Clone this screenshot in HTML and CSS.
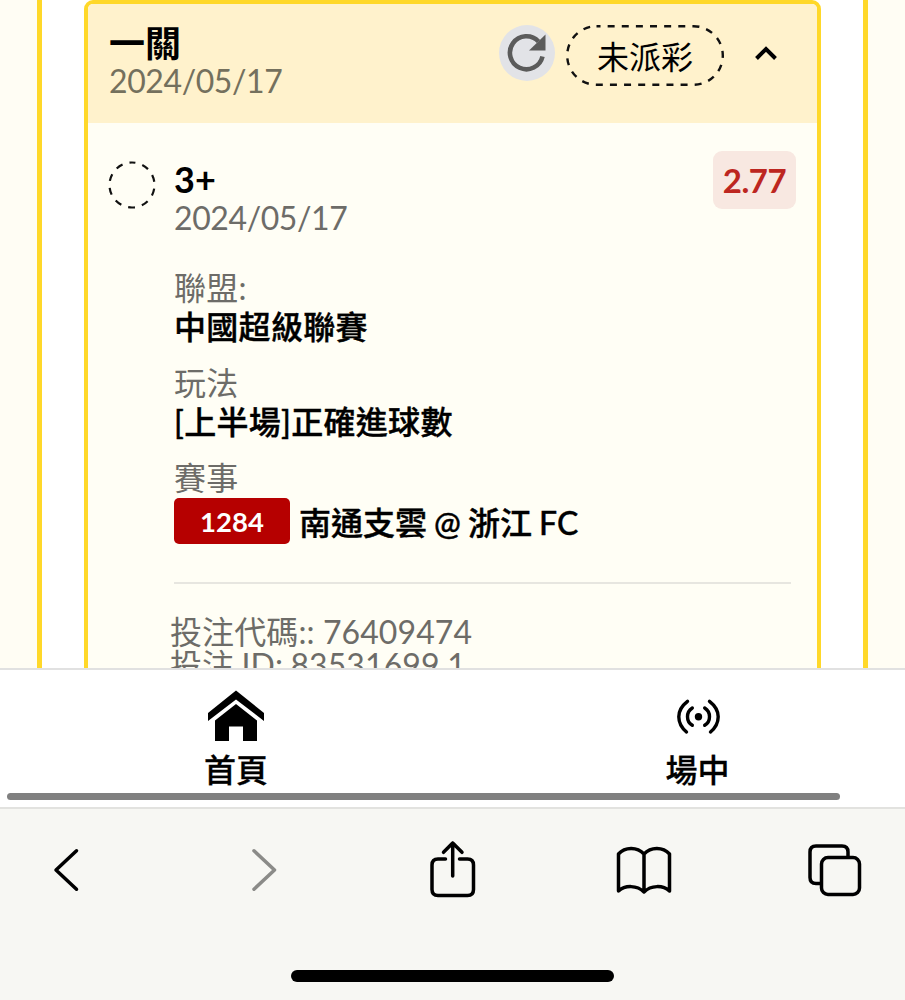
FILE: index.html
```html
<!DOCTYPE html>
<html lang="zh-Hant">
<head>
<meta charset="utf-8">
<title>投注記錄</title>
<link rel="stylesheet" href="styles.css">
</head>
<body>
<main class="page">
  <div class="panel">
    <article class="card">
      <header class="card-head">
        <div class="head-text">
          <h1 class="title">一關</h1>
          <p class="date head-date">2024/05/17</p>
        </div>
        <div class="head-actions">
          <span class="refresh">
            <svg width="56" height="56" viewBox="0 0 56 56"><path d="M43.500 31.500A16.500 16.500 0 1 1 39.500 16.500" fill="none" stroke="#5b5b5b" stroke-width="4.600"/><path d="M46.500 9.500V25.500H30Z" fill="#5b5b5b"/></svg>
          </span>
          <span class="status">
            <svg class="outline" width="158" height="61" viewBox="0 0 158 61"><rect x="1.200" y="1.200" width="155.600" height="58.600" rx="29.300" fill="none" stroke="#111" stroke-width="2.400" stroke-dasharray="7 7.130" stroke-dashoffset="3"/></svg>
            <span class="status-text">未派彩</span>
          </span>
          <svg class="caret" width="24" height="20" viewBox="0 0 24 20"><path d="M2.500 14.500L12 5L21.500 14.500" fill="none" stroke="#000" stroke-width="4"/></svg>
        </div>
      </header>
      <section class="card-body">
        <svg class="ring" width="48" height="48" viewBox="0 0 48 48"><circle cx="24" cy="24" r="22.500" fill="none" stroke="#111" stroke-width="2.200" stroke-dasharray="7 7.137" stroke-dashoffset="3.500" transform="rotate(-90 24 24)"/></svg>
        <div class="detail">
          <div class="pick-row">
            <div>
              <h2 class="pick">3+</h2>
              <p class="date">2024/05/17</p>
            </div>
            <span class="odds">2.77</span>
          </div>
          <dl class="facts">
            <div class="fact"><dt>聯盟:</dt><dd>中國超級聯賽</dd></div>
            <div class="fact"><dt>玩法</dt><dd>[上半場]正確進球數</dd></div>
            <div class="fact"><dt>賽事</dt><dd class="match"><span class="code">1284</span><span class="teams">南通支雲 @ 浙江 FC</span></dd></div>
          </dl>
          <div class="ids">
            <p>投注代碼:: 76409474</p>
            <p class="bet-id">投注 ID: 83531699.1</p>
          </div>
        </div>
      </section>
    </article>
  </div>
</main>
<nav class="tabs">
  <a class="tab home">
    <svg width="58" height="52" viewBox="0 0 58 52"><path d="M29 0.500L57 23V31L29 9.500L1 31V23Z"/><path d="M29 14L50 30.500V51H36V36.500H22V51H8V30.500Z"/></svg>
    <span>首頁</span>
  </a>
  <a class="tab live">
    <svg width="58" height="52" viewBox="0 0 58 52"><g fill="none" stroke="#000" stroke-width="3.400" stroke-linecap="round"><path d="M18.500 11.300Q9.800 18 9.800 26.700T17.500 42M23.300 18Q18.500 21 18.500 26.700T23.300 35.300M35.700 18Q40.500 21 40.500 26.700T35.700 35.300M40.500 11.300Q49.200 18 49.200 26.700T41.500 42"/></g><circle cx="29.500" cy="26.700" r="3.700"/></svg>
    <span>場中</span>
  </a>
  <div class="scrollbar"></div>
</nav>
<footer class="browser">
  <div class="tools">
    <svg class="back" width="28" height="46" viewBox="0 0 28 46"><path d="M24.500 3.800L4 23L24.500 42.200" class="line"/></svg>
    <svg class="muted" width="28" height="46" viewBox="0 0 28 46"><path d="M4 3.800L24.500 23L4 42.200" class="line"/></svg>
    <svg class="share" width="46" height="58" viewBox="0 0 46 58"><path d="M15.500 19H8Q2 19 2 25V49.500Q2 55.500 8 55.500H37.500Q43.500 55.500 43.500 49.500V25Q43.500 19 37.500 19H29.500M22.700 36V3M13.500 12.300L22.700 3L32 12.300" class="line"/></svg>
    <svg width="58" height="50" viewBox="0 0 58 50"><path d="M29 8C22 0.500 10 .8 3.500 8V45C10 39 22 39 29 46C36 39 48 39 54.500 45V8C48 .8 36 .5 29 8V46" class="line"/></svg>
    <svg width="56" height="56" viewBox="0 0 56 56"><path d="M41 14V9Q41 3 35 3H9Q3 3 3 9V34.500Q3 40.500 9 40.500H14" class="line"/><rect x="14.500" y="14.500" width="38" height="37" rx="6.500" class="line"/></svg>
  </div>
  <div class="home-bar"></div>
</footer>
</body>
</html>
```

FILE: styles.css
```css
* { box-sizing: border-box; margin: 0; padding: 0; }
body { width: 905px; height: 1000px; overflow: hidden; display: flex; flex-direction: column; background: #fff; color: #000; font-family: Lato, "Noto Sans CJK TC", sans-serif; font-size: 32px; line-height: 38px; white-space: nowrap; }
svg { display: block; flex: none; }
.page { height: 668px; flex: none; overflow: hidden; background: #fffdf4; padding: 0 37px; }
.panel { height: 668px; background: #fff; border: solid #ffd829; border-width: 0 5px; padding: 0 42px; }
.card { width: 737px; height: 720px; border: 4px solid #ffd829; border-radius: 9px; background: #fffef5; overflow: hidden; }
.card-head { height: 119px; background: #fff2cc; display: flex; justify-content: space-between; padding: 20px 39px 0 21px; }
.title { font-size: 36px; line-height: 38px; font-weight: 700; }
.date { color: #6d6c68; letter-spacing: -.4px; }
.head-date { color: #74705d; }
.head-actions { display: flex; align-items: flex-start; }
.refresh { width: 56px; height: 56px; border-radius: 50%; background: #e2e3e7; margin-top: 1px; }
.status { position: relative; width: 158px; height: 61px; margin: 1px 0 0 11px; padding-top: 3px; display: flex; align-items: center; justify-content: center; }
.outline { position: absolute; inset: 0; }
.caret { margin: 20px 0 0 30px; }
.card-body { display: flex; align-items: flex-start; padding: 28px 21px 0 20px; }
.ring { margin-top: 10px; }
.detail { margin-left: 18px; flex: 1; }
.pick-row { display: flex; justify-content: space-between; align-items: flex-start; }
.pick { font-size: 36px; line-height: 38px; font-weight: 700; margin: 9px 0 1px; }
.odds { width: 83px; height: 58px; border-radius: 9px; background: #f8e8e1; color: #bd2620; font-size: 33px; font-weight: 700; letter-spacing: -.4px; line-height: 59px; text-align: center; }
.facts { width: 617px; height: 347px; padding-top: 32px; border-bottom: 2px solid #e7e6e0; }
.fact { height: 95px; }
dt { color: #6d6c68; line-height: 38px; letter-spacing: .2px; }
dd { font-weight: 500; -webkit-text-stroke: .4px #000; line-height: 40px; letter-spacing: .3px; }
.match { display: flex; align-items: center; height: 46px; margin-top: 1px; letter-spacing: 0; }
.code { width: 116px; height: 46px; line-height: 47px; border-radius: 5px; background: #b60000; color: #fff; text-align: center; font-size: 27.500px; font-weight: 700; -webkit-text-stroke: 0; margin-right: 9px; }
.teams { word-spacing: -1px; padding-top: 3px; }
.ids { margin: 29px 0 0 -4px; color: #6d6c68; letter-spacing: .1px; }
.bet-id { margin-top: -5px; word-spacing: -1px; }
.tabs { height: 139px; flex: none; position: relative; border-top: 2px solid #e1e1e1; background: #fff; display: grid; grid-template-columns: 472px 1fr; }
.tab { display: flex; flex-direction: column; align-items: center; padding-top: 20px; }
.tab span { line-height: 44px; margin-top: 6px; font-weight: 500; -webkit-text-stroke: .3px #000; }
.live { padding-left: 18px; }
.scrollbar { position: absolute; left: 7px; top: 123px; width: 833px; height: 7px; border-radius: 4px; background: #808080; }
.browser { flex: 1; border-top: 2px solid #e2e2df; background: #f7f7f3; }
.tools { height: 123px; display: grid; grid-template-columns: repeat(5, 191px); justify-content: center; justify-items: center; align-items: center; }
.back { margin: 0 9px 2px 0; }
.muted { margin: 0 0 2px 4px; }
.share { margin-bottom: 4px; }
.line { fill: none; stroke: #000; stroke-width: 3.500; stroke-linecap: round; stroke-linejoin: round; }
.muted .line { stroke: #8b8b88; }
.home-bar { width: 323px; height: 12px; border-radius: 6px; background: #000; margin: 38px auto 0; }
```
